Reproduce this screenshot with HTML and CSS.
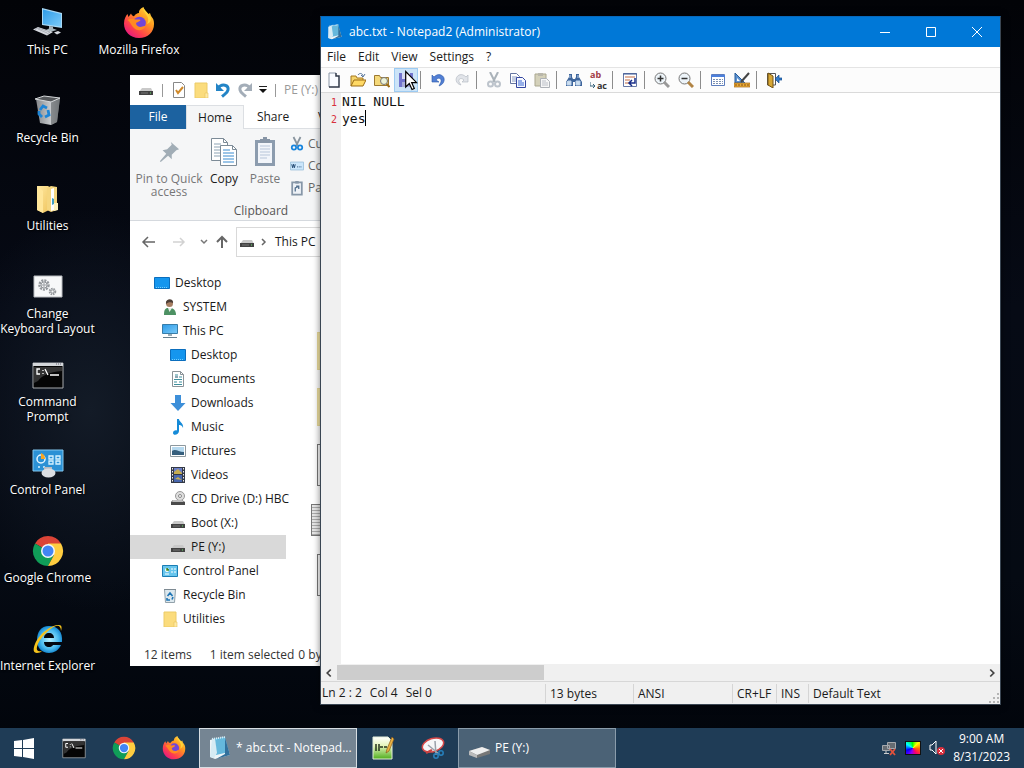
FILE: index.html
```
<!DOCTYPE html>
<html lang="en">
<head>
    <meta charset="UTF-8">
    <meta name="viewport" content="width=device-width, initial-scale=1.0">
    <title>Desktop</title>
    <link rel="stylesheet" href="styles.css">
</head>
<body>
    <!-- Shared icons -->
    <svg class="sprite" width="0" height="0" aria-hidden="true">
        <defs>
            <linearGradient id="gBlue" x1="0" y1="0" x2="1" y2="1"><stop offset="0" stop-color="#2d9be8"/><stop offset="1" stop-color="#7ccbf8"/></linearGradient>
            <linearGradient id="gFox" x1="1" y1="0" x2="0.2" y2="1"><stop offset="0" stop-color="#fff04a"/><stop offset="0.4" stop-color="#ff9a1f"/><stop offset="0.75" stop-color="#ff3f4d"/><stop offset="1" stop-color="#e31587"/></linearGradient>
            <linearGradient id="gBin" x1="0" y1="0" x2="1" y2="0"><stop offset="0" stop-color="#85888b"/><stop offset="0.6" stop-color="#c6c9cc"/><stop offset="1" stop-color="#76797c"/></linearGradient>
            <linearGradient id="gFold" x1="0" y1="0" x2="1" y2="1"><stop offset="0" stop-color="#ffe9a2"/><stop offset="1" stop-color="#efc35b"/></linearGradient>
            <radialGradient id="gIe"><stop offset="0" stop-color="#b9f1ff"/><stop offset="0.7" stop-color="#4bbcf0"/><stop offset="1" stop-color="#1a8bd2"/></radialGradient>
            <linearGradient id="gGreen" x1="0" y1="0" x2="0" y2="1"><stop offset="0" stop-color="#ffffff"/><stop offset="0.4" stop-color="#e4f5bb"/><stop offset="1" stop-color="#4fae1d"/></linearGradient>
        </defs>
        <symbol id="pc" viewBox="0 0 32 32">
            <path d="M10 1l20 5v15l-20-3z" fill="#a9d9f5"/>
            <path d="M11 2.500l18 4.500v12.500l-18-2.500z" fill="url(#gBlue)"/>
            <path d="M17 19l4 .6v2l4 1.500-7 2-4-2 3-1.500z" fill="#a8b6bd"/>
            <path d="M1 22.500l5-2.500 15 5-6 3.500z" fill="#d6d9df"/>
            <path d="M3 22.500l3-1.500 12 4-3 2M6 22l9 4" stroke="#9a9da8" stroke-width=".7" fill="none"/>
            <path d="M22 25.500l4-1.500 3 1.500-4 2z" fill="#d6d9df"/>
        </symbol>
        <symbol id="firefox" viewBox="0 0 32 32">
            <path d="M16 31C7 31 1 24.500 1 16.500 1 12 3 8.500 4.500 7l1 3L8 6.500c.5 1.500 1.500 2.500 3 2.800C12.500 7 14 6.300 16 6c-.3-2.500 1-4.500 4.500-6 .5 3 3 4.500 5 7l1.500-1c.5 2 1 3 2.500 5C31 13 31 15.500 31 17 31 25 25 31 16 31z" fill="url(#gFox)"/>
            <circle cx="16.500" cy="16" r="6.300" fill="#7246d8"/>
            <path d="M4.500 13c3-2 5-1.500 8-.5 2 .3 4-.5 5 .5-1 2-4 2-4.500 3.500.5 3 4 4 6.500 3 2-1 3.500-.5 2.500 1C19 24 14 24 11 21c-3-3-3-5-6.500-8z" fill="#ff8a22"/>
            <path d="M20.500 1c-.5 4 3.500 6 4.500 10 .5 2 0 4-1 6 3-1 4-3 4-6" fill="#ffdd3b" opacity=".8"/>
        </symbol>
        <symbol id="bin" viewBox="0 0 32 32">
            <path d="M4 4l24-1-3 24-6 3-11-2z" fill="url(#gBin)"/>
            <path d="M19 7l9-4-3 24-6 3z" fill="#6f7376" opacity=".7"/>
            <path d="M3 4l9-3 16 2-9 4z" fill="#55585b" stroke="#d5d8da"/>
            <g fill="none" stroke="#1e85d6" stroke-width="2.800"><path d="M8 15l3-4 4 2M16 15l1 5-4 2M10 22l-3-3 0-3"/></g>
        </symbol>
        <symbol id="folders" viewBox="0 0 32 32">
            <path d="M5 3h11l3 2v21l-8 4-6-3z" fill="url(#gFold)"/>
            <path d="M15 5l4-2 6 1v23l-6 2-4-2z" fill="#f5d67f"/>
            <path d="M19 6l3-1v22l-3 1z" fill="#fff"/>
            <path d="M20 15l2 1v5l-2 1z" fill="#3f9ec4"/>
            <path d="M8 5l3 3v22l-6-3V3z" fill="#ffe69a"/>
            <path d="M22 20h4v7l-4 1z" fill="#fff2bd"/>
        </symbol>
        <symbol id="gears" viewBox="0 0 32 32">
            <path d="M2 5h28v21H2z" fill="#f7f8f9" stroke="#b9bcc0"/>
            <g fill="none" stroke="#94989c"><circle cx="12" cy="14" r="4.500" stroke-width="2.500" stroke-dasharray="2 1"/><circle cx="12" cy="14" r="3"/><circle cx="12" cy="14" r="1.200"/><circle cx="20.500" cy="20.500" r="2.800" stroke-width="2" stroke-dasharray="1.500 .8"/><circle cx="20.500" cy="20.500" r="1.500"/></g>
        </symbol>
        <symbol id="cmd" viewBox="0 0 32 32">
            <path d="M1 4h30v25H1z" fill="#050505" stroke="#a8abae"/>
            <path d="M1 4h30v3H1z" fill="#d4d7da"/><path d="M24 5h6" stroke="#667" stroke-dasharray="1 1"/>
            <path d="M2 8h28v4C17 13 9 17 6 22l-4 2z" fill="#333"/>
            <path d="M8 10H5v5h3M11 11v1M11 14v1M13 10l3 6M18 16h9" stroke="#fff" stroke-width="1.300" fill="none"/>
        </symbol>
        <symbol id="cpanel" viewBox="0 0 32 32">
            <path d="M1 3h30v21H1z" fill="#2b91d5" stroke="#83c7ef"/>
            <circle cx="9" cy="12" r="4" fill="none" stroke="#e3f5ff" stroke-width="1.500"/><path d="M9 12V6a6 6 0 0 1 4 6z" fill="#f6a623"/>
            <path d="M17 9h4v3h-4zM24 9h4v3h-4zM17 14h4v3h-4zM24 14h4v3h-4zM6 20h2M11 20h2" fill="none" stroke="#d6f2ff" stroke-width="1.300"/>
            <path d="M12 20h8v6h-8z" fill="#b6bac0"/><ellipse cx="16.500" cy="26" rx="7" ry="4.500" fill="#dcdee2"/>
        </symbol>
        <symbol id="chrome" viewBox="0 0 32 32">
            <path d="M16 16L3 8.500a15 15 0 0 1 26 0z" fill="#db4437"/>
            <path d="M16 16L3 8.500A15 15 0 0 0 16 31l6-11z" fill="#109d58"/>
            <path d="M16 16V8.500h13A15 15 0 0 1 16 31l6-11z" fill="#ffcd40"/>
            <circle cx="16" cy="16" r="7" fill="#f4f7fb"/><circle cx="16" cy="16" r="5.500" fill="#4285f4"/>
        </symbol>
        <symbol id="ie" viewBox="0 0 32 32">
            <path d="M17 3C9 3 5 9 5 17s5 13 12 13c5 0 10-3 12-8h-8c-1 1.500-2 2-4 2-3 0-5-2-5-5h18C31 9 26 3 17 3zm-5 12c0-3 2-5 5-5s5 2 5 5z" fill="url(#gIe)" fill-rule="evenodd"/>
            <path d="M29 8c1-3 1-6-2-6C20 1 7 11 3 21c-2 5-2 9 2 9 2 0 4-1 5-2-3 1-6 0-5-4C7 15 18 5 24 3c3-1 5 1 5 5z" fill="#f5c31c"/>
        </symbol>
        <symbol id="drive" viewBox="0 0 16 16"><path d="M4 6h9l2 4H1z" fill="#c9c9c9"/><path d="M1 9h14v4H1z" fill="#424242"/><path d="M3 11h7" stroke="#777"/><path d="M12 11h1" stroke="#69e36d"/></symbol>
        <symbol id="cd" viewBox="0 0 16 16"><circle cx="10" cy="5" r="4.500" fill="#dedede" stroke="#999"/><circle cx="10" cy="5" r="1.500" fill="#fff" stroke="#888"/><path d="M3 9h9l3 2v3H1v-3z" fill="#4a4a4a"/><path d="M3 9h9l2 2H2z" fill="#bcbcbc"/></symbol>
        <symbol id="folder" viewBox="0 0 16 16"><path d="M2 1h12v15H2z" fill="#fbdc7d" stroke="#eccb68"/><path d="M12 11h3v5h-3z" fill="#ffeaa4" stroke="#e8c35c" stroke-width=".6"/></symbol>
        <symbol id="screen" viewBox="0 0 16 16"><path d="M.5 2.500h15v11H.5z" fill="#1596ee" stroke="#0b6ebd"/><path d="M2 12.500h12" stroke="#76d0ff" stroke-dasharray="1 1"/></symbol>
        <symbol id="monitor" viewBox="0 0 16 16"><path d="M.5 1.500h15v9H.5z" fill="url(#gBlue)" stroke="#377da9"/><path d="M6 11h4v2H6z" fill="#9aabb3"/><path d="M1 14.500h14" stroke="#667f8d"/></symbol>
        <symbol id="user" viewBox="0 0 16 16"><circle cx="7.500" cy="4.500" r="3.500" fill="#a67e62"/><path d="M4 5c-1-6 8-6 7-1C9 3 6 3 4 5z" fill="#4b3d35"/><path d="M2 16c0-5 1-7 4-7h2c4 0 6 3 6 7z" fill="#4d9163"/><path d="M6 9l1.500 4L10 9z" fill="#e9efe9"/></symbol>
        <symbol id="doc" viewBox="0 0 16 16"><path d="M2.500.5h8l3 3v12h-11z" fill="#fff" stroke="#8b9398"/><path d="M10.500.5v3h3" fill="none" stroke="#8b9398"/><path d="M5 4h3M9 6h3M4 8.500h8M4 11h3M9 11h3M4 13.500h8" stroke="#3f8f9d"/><path d="M5 6h3" stroke="#25516a"/></symbol>
        <symbol id="down" viewBox="0 0 16 16"><path d="M5 0h6v8h4.500L8 16 .5 8H5z" fill="#3d8fd9"/></symbol>
        <symbol id="music" viewBox="0 0 16 16"><path d="M7 0h2c0 3 5 4 4 9-1-3-3-3-4-3v6c0 4-6 5-6 2 0-2 2-3 4-2.500z" fill="#168bd8"/></symbol>
        <symbol id="picture" viewBox="0 0 16 16"><path d="M.5 2.500h15v11H.5z" fill="#fff" stroke="#8d989e"/><path d="M2 4h12v8H2z" fill="#b6d9ef"/><path d="M2 8c4-3 6 1 12 1v3H2z" fill="#365f7d"/></symbol>
        <symbol id="video" viewBox="0 0 16 16"><path d="M1 0h14v16H1z" fill="#333947"/><path d="M4 1h8v6H4z" fill="#6d80c8"/><path d="M4 8h8v7H4z" fill="#4867ae"/><path d="M4 5l4-3 4 4v1H4zM5 12l3-2 4 3z" fill="#c5ac50"/><path d="M2.500 1v14M13.500 1v14" stroke="#eee" stroke-dasharray="1.500 1.500"/></symbol>
        <symbol id="smallbin" viewBox="0 0 16 16"><path d="M2.500 2.500h11l-1 13h-9z" fill="#dce8ee" stroke="#92a1aa"/><path d="M2 2.500h12" stroke="#7d8a92"/><path d="M5.500 9L8 6l2.500 3M11 10l-1 2.500M8 13H5l0-2" stroke="#1f75b5" stroke-width="1.600" fill="none"/></symbol>
        <symbol id="panel" viewBox="0 0 16 16"><path d="M.5 2.500h15v11H.5z" fill="#67c5ed" stroke="#1a7db4"/><circle cx="5" cy="7" r="2" fill="#fff"/><path d="M5 5v2h2" stroke="#3f8a23" stroke-width="1.500"/><path d="M9 6h2M12 6h2M9 9h2M12 9h2M3 11h4" stroke="#fff"/></symbol>
        <symbol id="undo" viewBox="0 0 16 16"><path d="M3 6c4-5 11-3 10 2-.5 3-3 4-6 6.500" fill="none" stroke="currentColor" stroke-width="3"/><path d="M1 1v8h8z" fill="currentColor"/></symbol>
        <symbol id="redo" viewBox="0 0 16 16"><path d="M13 6C9 1 2 3 3 8c.5 3 3 4 6 6.500" fill="none" stroke="currentColor" stroke-width="3"/><path d="M15 1v8H7z" fill="currentColor"/></symbol>
        <symbol id="scissors" viewBox="0 0 16 16"><path d="M4 0l5 10M12 0L7 10" stroke="#88949e" stroke-width="2"/><g fill="none" stroke="currentColor" stroke-width="2"><circle cx="4.500" cy="12" r="2.500"/><circle cx="11.500" cy="12" r="2.500"/></g></symbol>
        <symbol id="pages" viewBox="0 0 26 30"><g fill="#fff" stroke="#7c8b97"><path d="M.5 1.500h12l4 4v18H.5z"/><path d="M9.500 8.500h12l4 4v16h-16z"/></g><path d="M12.500 1.500v4h4M21.500 8.500v4h4" fill="none" stroke="#7c8b97"/><path d="M3 7h7M3 10h6M3 13h6M3 16h6M3 19h6" stroke="#8da3b4"/><path d="M12 13h7M12 16h11M12 19h11M12 22h11M12 25h11" stroke="#398bd0"/></symbol>
        <symbol id="clipboard" viewBox="0 0 22 30"><path d="M1 3h20v26H1z" fill="#8c9cae"/><path d="M4 6h14v20H4z" fill="#f2f5fa"/><path d="M6 9h10M6 12h10M6 15h10M6 18h10M6 21h7" stroke="#b7c5d9"/><path d="M6 2h3V0h4v2h3v4H6z" fill="#8795a6"/></symbol>
        <symbol id="notepad" viewBox="0 0 24 24"><path d="M2 4l14-3 6 18-15 4-5-2z" fill="#eef4f7"/><path d="M4 3l13-2 4 15-13 3z" fill="#65b8dc"/><path d="M4 3l3-.5L9 17l-3 5-4-1z" fill="#d5ebf4"/><path d="M17 2l5 17-14 4 9-5z" fill="#326f9b"/><path d="M4 3l13-2" stroke="#d8edf6" stroke-width="2" stroke-dasharray="1 1"/></symbol>
        <symbol id="npp" viewBox="0 0 24 24"><path d="M2 1h15l4 4v18H2z" fill="url(#gGreen)" stroke="#e4eeda"/><path d="M5 8v7M8 8v7M9 11h3M13 11h3" stroke="#26351e" stroke-width="1.500"/><path d="M21 1l2 2-5 12-3 2 1-4z" fill="#eab344" stroke="#8b5a1a" stroke-width=".7"/></symbol>
        <symbol id="snip" viewBox="0 0 24 24"><ellipse cx="12" cy="9" rx="11" ry="6.500" fill="#f6f6f8" stroke="#d64848" stroke-width="1.500" transform="rotate(-18 12 9)"/><path d="M7 9l11 9M14 5l1 14" stroke="#9aa0aa" stroke-width="1.500"/><circle cx="15" cy="20" r="2.200" fill="none" stroke="#2781bd" stroke-width="1.500"/><circle cx="20" cy="17" r="2.200" fill="none" stroke="#2781bd" stroke-width="1.500"/><path d="M5 17l6-3" stroke="#c64242" stroke-width="2.500"/></symbol>
    </svg>

    <div class="desktop">
        <main class="shortcuts">
            <a class="shortcut" href="#"><svg><use href="#pc"/></svg><span>This PC</span></a>
            <a class="shortcut" href="#"><svg><use href="#bin"/></svg><span>Recycle Bin</span></a>
            <a class="shortcut" href="#"><svg><use href="#folders"/></svg><span>Utilities</span></a>
            <a class="shortcut" href="#"><svg><use href="#gears"/></svg><span>Change<br>Keyboard Layout</span></a>
            <a class="shortcut" href="#"><svg><use href="#cmd"/></svg><span>Command<br>Prompt</span></a>
            <a class="shortcut" href="#"><svg><use href="#cpanel"/></svg><span>Control Panel</span></a>
            <a class="shortcut" href="#"><svg><use href="#chrome"/></svg><span>Google Chrome</span></a>
            <a class="shortcut" href="#"><svg><use href="#ie"/></svg><span>Internet Explorer</span></a>
            <a class="shortcut" href="#"><svg><use href="#firefox"/></svg><span>Mozilla Firefox</span></a>
        </main>

        <!-- File Explorer -->
        <section class="window explorer">
            <header class="explorer-title">
                <svg class="icon"><use href="#drive"/></svg>
                <i class="bar"></i>
                <button aria-label="Properties"><svg class="icon" viewBox="0 0 16 16"><path d="M2.500.5h8l3 3v12h-11z" fill="#fff" stroke="#888"/><path d="M5 8l2 3 5-6" fill="none" stroke="#d08a2b" stroke-width="2"/></svg></button>
                <button aria-label="New folder"><svg class="icon"><use href="#folder"/></svg></button>
                <button class="blue" aria-label="Undo"><svg class="icon"><use href="#undo"/></svg></button>
                <button class="grey" aria-label="Redo"><svg class="icon"><use href="#redo"/></svg></button>
                <button class="more" aria-label="Customize"><svg viewBox="0 0 8 8"><path d="M0 .5h8" stroke="#222"/><path d="M0 3h8L4 7z" fill="#111"/></svg></button>
                <i class="bar"></i>
                <span class="caption">PE (Y:)</span>
            </header>
            <nav class="tabs">
                <button class="tab file">File</button>
                <button class="tab active">Home</button>
                <button class="tab">Share</button>
                <button class="tab">View</button>
            </nav>
            <div class="ribbon">
                <div class="ribbon-group">
                    <div class="ribbon-tools">
                        <button class="big pin"><svg viewBox="0 0 24 24"><path d="M14 1l9 8-3 1-5 5v5l-4-4-8 7-1-1 7-8-4-4 5-1 5-5z" fill="#a1adb6"/></svg>Pin to Quick access</button>
                        <button class="big copy"><svg viewBox="0 0 26 30"><use href="#pages"/></svg>Copy</button>
                        <button class="big paste"><svg viewBox="0 0 22 30"><use href="#clipboard"/></svg>Paste</button>
                        <div class="small-tools">
                            <button class="blue"><svg class="icon"><use href="#scissors"/></svg>Cut</button>
                            <button><svg class="icon" viewBox="0 0 16 16"><path d="M.5 3.500h15v9H.5z" fill="#cbe6fb" stroke="#9dc1dc"/><path d="M2 6l1 4 1-4 1 4 1-4M8 9h1M10 9h1M12 9h1" fill="none" stroke="#173e68"/></svg>Copy path</button>
                            <button class="grey"><svg class="icon" viewBox="0 0 16 16"><path d="M2.500 1.500h11v14h-11z" fill="#eef2f7" stroke="#8797a8" stroke-width="2"/><path d="M6 0h4v3H6z" fill="#8797a8"/><path d="M6 12V8l4-2M7 6h3v3" stroke="#53718f" stroke-width="1.500" fill="none"/></svg>Paste shortcut</button>
                        </div>
                    </div>
                    <div class="group-name">Clipboard</div>
                </div>
            </div>
            <div class="address">
                <button aria-label="Back"><svg viewBox="0 0 16 16"><path d="M14 8H2M7 3L2 8l5 5" stroke="#666" stroke-width="1.500" fill="none"/></svg></button>
                <button aria-label="Forward"><svg viewBox="0 0 16 16"><path d="M2 8h11M9 4l4 4-4 4" stroke="#d2d2d2" stroke-width="1.500" fill="none"/></svg></button>
                <button class="recent" aria-label="Recent"><svg viewBox="0 0 16 16"><path d="M5 6l3 3 3-3" stroke="#777" stroke-width="1.500" fill="none"/></svg></button>
                <button aria-label="Up"><svg viewBox="0 0 16 16"><path d="M8 14V3M3 8l5-5 5 5" stroke="#666" stroke-width="2" fill="none"/></svg></button>
                <div class="path"><svg class="icon"><use href="#drive"/></svg><svg class="icon" viewBox="0 0 16 16"><path d="M7 5l3 3-3 3" stroke="#666" stroke-width="1.500" fill="none"/></svg><span>This PC</span></div>
            </div>
            <div class="explorer-body">
                <nav class="tree">
                    <a href="#"><svg class="icon"><use href="#screen"/></svg>Desktop</a>
                    <a class="level1" href="#"><svg class="icon"><use href="#user"/></svg>SYSTEM</a>
                    <a class="level1" href="#"><svg class="icon"><use href="#monitor"/></svg>This PC</a>
                    <a class="level2" href="#"><svg class="icon"><use href="#screen"/></svg>Desktop</a>
                    <a class="level2" href="#"><svg class="icon"><use href="#doc"/></svg>Documents</a>
                    <a class="level2" href="#"><svg class="icon"><use href="#down"/></svg>Downloads</a>
                    <a class="level2" href="#"><svg class="icon"><use href="#music"/></svg>Music</a>
                    <a class="level2" href="#"><svg class="icon"><use href="#picture"/></svg>Pictures</a>
                    <a class="level2" href="#"><svg class="icon"><use href="#video"/></svg>Videos</a>
                    <a class="level2" href="#"><svg class="icon"><use href="#cd"/></svg>CD Drive (D:) HBC</a>
                    <a class="level2" href="#"><svg class="icon"><use href="#drive"/></svg>Boot (X:)</a>
                    <a class="level2 selected" href="#"><svg class="icon"><use href="#drive"/></svg>PE (Y:)</a>
                    <a class="level1" href="#"><svg class="icon"><use href="#panel"/></svg>Control Panel</a>
                    <a class="level1" href="#"><svg class="icon"><use href="#smallbin"/></svg>Recycle Bin</a>
                    <a class="level1" href="#"><svg class="icon"><use href="#folder"/></svg>Utilities</a>
                </nav>
                <div class="files">
                    <i class="thumb yellow"></i><i class="thumb yellow"></i><i class="thumb"></i><i class="thumb wide"></i><i class="thumb"></i>
                </div>
            </div>
            <footer class="explorer-status"><span>12 items</span><span>1 item selected</span><span>0 bytes</span></footer>
        </section>

        <!-- Notepad2 -->
        <section class="window notepad">
            <header class="titlebar">
                <svg class="icon"><use href="#notepad"/></svg>
                <span class="caption">abc.txt - Notepad2 (Administrator)</span>
                <button aria-label="Minimize"><svg viewBox="0 0 10 10"><path d="M0 5.500h10" stroke="#fff"/></svg></button>
                <button aria-label="Maximize"><svg viewBox="0 0 10 10"><path d="M.5.5h9v9h-9z" stroke="#fff" fill="none"/></svg></button>
                <button aria-label="Close"><svg viewBox="0 0 10 10"><path d="M0 0l10 10M10 0L0 10" stroke="#fff"/></svg></button>
            </header>
            <nav class="menubar">
                <button>File</button><button>Edit</button><button>View</button><button>Settings</button><button>?</button>
            </nav>
            <div class="toolbar">
                <button aria-label="New"><svg class="icon" viewBox="0 0 16 16"><path d="M3 1h7l3 3v11H3z" fill="#fafcff"/><path d="M3 15V1h7" fill="none" stroke="#8c98a8"/><path d="M10 1v3h3v11H3" fill="none" stroke="#303848" stroke-width="1.500"/></svg></button>
                <button aria-label="Open"><svg class="icon" viewBox="0 0 16 16"><path d="M1 14V4h5l1 2h6v3" fill="#f5d46b" stroke="#a6781f"/><path d="M1 14l3-6h12l-3 6z" fill="#ffd965" stroke="#9a6b15"/><path d="M8 3c2-3 5-1 5 1M11 3l2 2 2-3" fill="none" stroke="#54739a"/></svg></button>
                <button aria-label="Browse"><svg class="icon" viewBox="0 0 16 16"><path d="M.5 13.500v-10h5l1 2h8v8z" fill="#f4d879" stroke="#9c7830"/><circle cx="10" cy="9" r="3.500" fill="#ecf2d7" stroke="#777"/><path d="M12.500 12l3 3" stroke="#9d6d17" stroke-width="2"/></svg></button>
                <button class="hot" aria-label="Save"><svg class="icon" viewBox="0 0 16 16"><path d="M1 1h14v14H1z" fill="#7275cd"/><path d="M4 1h8v6H4z" fill="#d6dcf3"/><path d="M4 10h8v5H4z" fill="#a7addb"/></svg></button>
                <i class="sep"></i>
                <button aria-label="Undo"><svg class="icon" viewBox="0 0 16 16"><path d="M2 3v7h7L6 8c2-3 6-2 5 2l-2 4c6-2 7-9 2-11-3-1-5 0-7 2z" fill="#527fd4" stroke="#2957a8" stroke-width=".6"/></svg></button>
                <button aria-label="Redo"><svg class="icon" viewBox="0 0 16 16"><path d="M14 3v7H8l2-2C7 5 4 7 5 10l2 3c-5-1-7-7-2-10 3-1 5 0 7 2z" fill="#e1e4e9" stroke="#b6bbc4" stroke-width=".7"/></svg></button>
                <i class="sep"></i>
                <button class="grey faded" aria-label="Cut"><svg class="icon"><use href="#scissors"/></svg></button>
                <button aria-label="Copy"><svg class="icon" viewBox="0 0 16 16"><path d="M.5 1.500h6l3 3v7h-9z" fill="#fff" stroke="#6575a0"/><path d="M2 5h5M2 7h5M2 9h5" stroke="#889ac2"/><path d="M6.500 5.500h6l3 3v7h-9z" fill="#f5f8ff" stroke="#3547a0"/><path d="M8 9h4M8 11h6M8 13h6" stroke="#3966d2"/></svg></button>
                <button aria-label="Paste"><svg class="icon" viewBox="0 0 16 16"><path d="M1 2h11v12H1z" fill="#d4d1ba" stroke="#aaa78f"/><path d="M4 1h5v3H4z" fill="#b9b7ab"/><path d="M6.500 6.500h6l3 3v6h-9z" fill="#f6f6f6" stroke="#aeb2b8"/><path d="M8 9h4M8 11h6M8 13h6" stroke="#bcc0c8"/></svg></button>
                <i class="sep"></i>
                <button aria-label="Find"><svg class="icon" viewBox="0 0 16 16"><path d="M3 2h3v3l1 2h2l1-2V2h3v3l3 5v4H9v-4H7v4H0v-4l3-5z" fill="#3e659b"/><path d="M2 9h3v4H1v-3zM11 9h3v4h-4V9zM4 3v3M12 3v3" fill="#cddff0" stroke="#bed4ec"/></svg></button>
                <button class="replace" aria-label="Replace"><b>ab</b><b>ac</b><svg viewBox="0 0 6 6"><path d="M0 0v4h5M3 2l2 2-2 2" fill="none" stroke="#356078"/></svg></button>
                <i class="sep"></i>
                <button aria-label="Word wrap"><svg class="icon" viewBox="0 0 16 16"><path d="M1.500 1.500h13v13h-13z" fill="#fff" stroke="#6678a6"/><path d="M1 2h14" stroke="#3b5692"/><path d="M3 5h10M3 8h5M3 11h4" stroke="#c36a42"/><path d="M13 6v5H8M10 8l-3 3 3 3" fill="none" stroke="#172d89" stroke-width="1.500"/></svg></button>
                <i class="sep"></i>
                <button aria-label="Zoom in"><svg class="icon" viewBox="0 0 16 16"><circle cx="6.500" cy="6.500" r="5.500" fill="#edf4f9" stroke="#777"/><path d="M3.500 6.500h6M6.500 3.500v6" stroke="#333" stroke-width="1.500"/><path d="M10 10l5 5" stroke="#999" stroke-width="3"/></svg></button>
                <button aria-label="Zoom out"><svg class="icon" viewBox="0 0 16 16"><circle cx="6.500" cy="6.500" r="5.500" fill="#edf4f9" stroke="#777"/><path d="M3.500 6.500h6" stroke="#333" stroke-width="1.500"/><path d="M10 10l5 5" stroke="#b18445" stroke-width="3"/></svg></button>
                <i class="sep"></i>
                <button aria-label="Scheme"><svg class="icon" viewBox="0 0 16 16"><path d="M1.500 2.500h13v11h-13z" fill="#fff" stroke="#5d7dbd"/><path d="M1 3h14v2H1z" fill="#4d80db"/><path d="M3 7.500h10M3 9.500h10M3 11.500h10" stroke="#7b90b2" stroke-dasharray="2 1"/></svg></button>
                <button aria-label="Customize schemes"><svg class="icon" viewBox="0 0 16 16"><path d="M1 1v10h10z" fill="#5c91cf" stroke="#265c9c"/><path d="M3 6v3h3z" fill="#fff"/><path d="M0 11h16v4H0z" fill="#e9ae37" stroke="#a86418" stroke-width=".7"/><path d="M15 1L7 10" stroke="#444" stroke-width="2"/><path d="M2 12v2M5 12v2M8 12v2M11 12v2M14 12v2" stroke="#8b4d16"/></svg></button>
                <i class="sep"></i>
                <button aria-label="Exit"><svg class="icon" viewBox="0 0 16 16"><path d="M1.500 13V1.500h8V13z" fill="#fff" stroke="#555"/><path d="M2 1l5 3v12l-5-3z" fill="#d7a735" stroke="#735314"/><path d="M16 6h-3V3L9 7l4 4V8h3z" fill="#357bc8" stroke="#164e91" stroke-width=".7"/></svg></button>
            </div>
            <div class="editor">
                <div class="gutter"><span>1</span><span>2</span></div>
                <div class="page">
                    <textarea class="text" aria-label="Document text" spellcheck="false">NIL NULL
yes</textarea>
                    <i class="caret"></i>
                </div>
            </div>
            <div class="scrollbar">
                <button aria-label="Scroll left"><svg viewBox="0 0 16 16"><path d="M10 4L6 8l4 4" stroke="#444" stroke-width="2" fill="none"/></svg></button>
                <div class="track"><i class="grip"></i></div>
                <button aria-label="Scroll right"><svg viewBox="0 0 16 16"><path d="M6 4l4 4-4 4" stroke="#444" stroke-width="2" fill="none"/></svg></button>
            </div>
            <footer class="statusbar">
                <div class="position"><span>Ln 2 : 2</span><span>Col 4</span><span>Sel 0</span></div>
                <span class="bytes">13 bytes</span><span class="encoding">ANSI</span><span class="eol">CR+LF</span><span class="mode">INS</span><span class="scheme">Default Text</span>
                <svg class="resize" viewBox="0 0 10 10"><path d="M8 0h2v2H8zM4 4h2v2H4zM8 4h2v2H8zM0 8h2v2H0zM4 8h2v2H4zM8 8h2v2H8z" fill="#b5b5b5"/></svg>
            </footer>
            <svg class="pointer" viewBox="0 0 13 21"><path d="M.7 1.500v15.500l3.600-3.500 2.700 6 2.300-1-2.600-5.800h5z" fill="#fff" stroke="#000" stroke-width="1.200"/></svg>
        </section>
    </div>

    <footer class="taskbar">
        <button class="task" aria-label="Start"><svg viewBox="0 0 24 24"><path d="M2 5l8-1v8H2zM11 4l11-2v10H11zM2 13h8v8l-8-1zM11 13h11v10l-11-2z" fill="#fff"/></svg></button>
        <button class="task" aria-label="Command Prompt"><svg><use href="#cmd"/></svg></button>
        <button class="task" aria-label="Google Chrome"><svg><use href="#chrome"/></svg></button>
        <button class="task" aria-label="Mozilla Firefox"><svg><use href="#firefox"/></svg></button>
        <button class="task open focused"><svg><use href="#notepad"/></svg><span>* abc.txt - Notepad...</span></button>
        <button class="task" aria-label="Notepad++"><svg><use href="#npp"/></svg></button>
        <button class="task" aria-label="Snipping Tool"><svg><use href="#snip"/></svg></button>
        <button class="task open"><svg viewBox="0 0 24 24"><path d="M2 15l13-4 8 3v4L10 22l-8-3z" fill="#777"/><path d="M2 15l13-4 8 3-13 5z" fill="#eee"/><path d="M2 15l8 4v3l-8-3z" fill="#bbb"/></svg><span>PE (Y:)</span></button>
        <div class="tray">
            <svg viewBox="0 0 16 16"><path d="M6.500 2.500h8v6h-8zM1.500 5.500h7v5h-7z" fill="#666c72" stroke="#a5a9ad"/><path d="M3 13.500h5M5 11v2" stroke="#ccc"/><path d="M9 9l5 6M14 9l-5 6" stroke="#e4513b" stroke-width="1.800"/></svg>
            <div class="colors"></div>
            <svg viewBox="0 0 16 16"><path d="M1 5h2l4-4v13l-4-4H1z" fill="none" stroke="#fff"/><circle cx="12" cy="11" r="4" fill="#d92f3d"/><path d="M10 9l4 4M14 9l-4 4" stroke="#fff"/></svg>
            <time>9:00 AM<br>8/31/2023</time>
        </div>
    </footer>
</body>
</html>
```

FILE: styles.css
```
* {
    box-sizing: border-box;
}
body {
    margin: 0;
    height: 100vh;
    overflow: hidden;
    display: flex;
    flex-direction: column;
    font: 12px/16px "Open Sans", "Noto Sans", sans-serif;
    color: #1a1a1a;
    background:
        radial-gradient(ellipse 140px 200px at 90px 410px, #131b27, transparent),
        linear-gradient(#020307, #060a15 40%, #050a13 75%, #01040a);
}
button {
    font: inherit;
    color: inherit;
    background: none;
    border: 0;
    padding: 0;
    display: flex;
    align-items: center;
    justify-content: center;
    white-space: nowrap;
}
a {
    color: inherit;
    text-decoration: none;
}
svg {
    flex: none;
}
.sprite {
    position: absolute;
}
.icon {
    width: 16px;
    height: 16px;
}
.blue {
    color: #2384c6;
}
.grey {
    color: #a3adb8;
}
.faded {
    opacity: 0.7;
}

/* Desktop */
.desktop {
    flex: 1;
    min-height: 0;
    position: relative;
}
.shortcuts {
    display: grid;
    grid-template-rows: repeat(8, 88px);
    grid-template-columns: 95px 88px;
    grid-auto-flow: column;
}
.shortcut {
    display: flex;
    flex-direction: column;
    align-items: center;
    padding-top: 7px;
    gap: 3px;
    color: #fff;
    text-align: center;
    line-height: 15px;
    white-space: nowrap;
    text-shadow: 1px 1px 2px #000;
}
.shortcut svg {
    width: 32px;
    height: 32px;
}
.window {
    position: absolute;
    display: flex;
    flex-direction: column;
    overflow: hidden;
    background: #fff;
}

/* Explorer */
.explorer {
    left: 130px;
    top: 75px;
    bottom: 62px;
    width: 50%;
}
.explorer-title {
    display: flex;
    align-items: center;
    height: 30px;
    padding-left: 8px;
    gap: 6px;
}
.bar {
    width: 1px;
    height: 13px;
    margin: 0 2px;
    background: #999;
}
.more svg {
    width: 8px;
    height: 8px;
}
.explorer-title .caption {
    color: #999;
}
.tabs {
    display: flex;
    height: 24px;
    border-bottom: 1px solid #dcdfe3;
}
.tab {
    width: 58px;
    height: 24px;
}
.tab.file {
    width: 56px;
    background: #1c62a0;
    color: #fff;
}
.tab.active {
    background: #f5f6f7;
    border: 1px solid #dcdfe3;
    border-bottom: 0;
}
.ribbon {
    background: #f5f6f7;
    border-bottom: 1px solid #d5d9de;
    height: 92px;
}
.ribbon-group {
    width: 262px;
}
.ribbon-tools {
    display: flex;
    height: 74px;
    padding-top: 4px;
}
.big {
    flex-direction: column;
    justify-content: flex-start;
    gap: 5px;
    line-height: 13px;
    padding-top: 4px;
}
.big svg {
    width: 26px;
    height: 30px;
}
.big.pin {
    width: 78px;
    white-space: normal;
    color: #777;
}
.pin svg {
    width: 22px;
}
.big.copy {
    width: 32px;
}
.big.paste {
    width: 50px;
    color: #777;
}
.small-tools {
    display: flex;
    flex-direction: column;
    gap: 6px;
    padding-top: 3px;
}
.small-tools button {
    justify-content: flex-start;
    gap: 4px;
    color: #666;
}
.small-tools svg {
    width: 14px;
}
.small-tools .blue svg {
    color: #1684dd;
}
.group-name {
    text-align: center;
    color: #555;
}
.address {
    display: flex;
    align-items: center;
    height: 41px;
    padding-left: 11px;
    gap: 14px;
}
.address svg {
    width: 16px;
    height: 16px;
}
.address .recent {
    width: 5px;
}
.address .recent + button {
    margin-left: -6px;
}
.path {
    flex: 1;
    height: 30px;
    display: flex;
    align-items: center;
    padding-left: 2px;
    margin-left: -8px;
    border: 1px solid #d9d9d9;
}
.path span {
    margin-left: 4px;
}
.explorer-body {
    flex: 1;
    display: flex;
    padding-top: 9px;
}
.tree {
    width: 156px;
}
.tree a {
    display: flex;
    align-items: center;
    gap: 5px;
    height: 24px;
    padding-left: 24px;
    white-space: nowrap;
}
.tree .level1 {
    padding-left: 32px;
}
.tree .level2 {
    padding-left: 40px;
}
.tree .selected {
    background: #d9d9d9;
}
.files {
    display: flex;
    flex-direction: column;
    gap: 18px;
    padding: 61px 0 0 31px;
}
.thumb {
    width: 30px;
    height: 42px;
    border: 1px solid #777;
    background: #fafafa;
}
.thumb.yellow {
    height: 38px;
    background: #f5e6a5;
    border-color: #eadb9c;
}
.thumb.wide {
    width: 36px;
    height: 32px;
    margin-left: -6px;
    background: repeating-linear-gradient(#e6e6e6 0 2px, #aaa 2px 3px);
}
.explorer-status {
    display: flex;
    align-items: center;
    height: 22px;
    padding-left: 14px;
    color: #333;
}
.explorer-status span {
    margin-right: 4px;
}
.explorer-status span:first-child {
    margin-right: 18px;
}

/* Notepad2 */
.notepad {
    left: 320px;
    right: 23px;
    top: 16px;
    bottom: 23px;
    border: 1px solid #3a4653;
    border-top-color: #0868bb;
    box-shadow: 0 0 7px rgba(0, 0, 0, 0.5);
}
.titlebar {
    display: flex;
    align-items: center;
    height: 30px;
    padding-left: 6px;
    background: #0078d7;
    color: #fff;
}
.titlebar .caption {
    flex: 1;
    padding-left: 6px;
}
.titlebar button {
    width: 46px;
    height: 30px;
}
.titlebar button svg {
    width: 10px;
    height: 10px;
}
.menubar {
    display: flex;
    height: 20px;
    padding-left: 6px;
    gap: 12px;
}
.toolbar {
    display: flex;
    align-items: center;
    height: 26px;
    padding-left: 1px;
    border-top: 1px solid #e4e4e4;
    border-bottom: 1px solid #dadada;
    background: #fcfcfc;
}
.toolbar button {
    width: 24px;
    height: 24px;
}
.toolbar .hot {
    background: #cce4f8;
    border: 1px solid #9dcbf2;
}
.sep {
    width: 1px;
    height: 18px;
    margin: 0 5px 0 2px;
    background: #8c8c8c;
}
.toolbar .replace {
    position: relative;
    flex-direction: column;
    font: 9px/11px "Open Sans", sans-serif;
    color: #333;
}
.replace b:first-child {
    align-self: flex-start;
    padding-left: 4px;
    color: #a23b45;
}
.replace b + b {
    align-self: flex-end;
    padding-right: 3px;
}
.replace svg {
    position: absolute;
    left: 4px;
    bottom: 4px;
    width: 6px;
    height: 6px;
}
.editor {
    flex: 1;
    display: flex;
    min-height: 0;
    font: 13px/17px "DejaVu Sans Mono", monospace;
}
.gutter {
    display: flex;
    flex-direction: column;
    width: 20px;
    padding: 1px 4px 0 0;
    background: #f0f0f0;
    color: #d8303c;
    font-size: 10px;
    text-align: right;
}
.page {
    flex: 1;
    position: relative;
}
.text {
    display: block;
    width: 100%;
    height: 100%;
    padding: 0 1px;
    border: 0;
    outline: 0;
    resize: none;
    font: inherit;
    color: #111;
}
.caret {
    position: absolute;
    left: 24px;
    top: 17px;
    width: 1px;
    height: 16px;
    background: #000;
}
.scrollbar {
    display: flex;
    height: 17px;
    background: #f0f0f0;
}
.scrollbar button {
    width: 16px;
}
.scrollbar svg {
    width: 14px;
    height: 14px;
}
.track {
    flex: 1;
}
.grip {
    display: block;
    width: 32%;
    height: 15px;
    margin-top: 1px;
    background: #cdcdcd;
}
.statusbar {
    display: flex;
    align-items: center;
    height: 23px;
    border-top: 1px solid #d7d7d7;
    background: #f0f0f0;
}
.statusbar > span {
    height: 19px;
    padding-left: 4px;
    border-left: 1px solid #d5d5d5;
    line-height: 19px;
}
.position {
    display: flex;
    flex: 1;
    gap: 8px;
    padding-left: 1px;
}
.bytes {
    width: 88px;
}
.encoding {
    width: 99px;
}
.eol {
    width: 44px;
}
.mode {
    width: 32px;
}
.scheme {
    width: 181px;
}
.resize {
    align-self: flex-end;
    width: 10px;
    height: 10px;
    margin: 0 1px 1px 0;
}
.pointer {
    position: absolute;
    left: 84px;
    top: 53px;
    width: 13px;
    height: 21px;
}

/* Taskbar */
.taskbar {
    display: flex;
    height: 40px;
    gap: 1px;
    background: #1f3c56;
    color: #fff;
}
.task {
    width: 49px;
}
.task:first-child {
    width: 48px;
}
.task svg {
    width: 24px;
    height: 24px;
}
.task.open {
    width: 158px;
    justify-content: flex-start;
    gap: 4px;
    padding-left: 8px;
    background: #4b6276;
    border: 1px solid #8a9cab;
}
.task.focused {
    background: #758593;
    border-color: #d6dde2;
}
.tray {
    display: flex;
    align-items: center;
    gap: 8px;
    margin-left: auto;
    padding-right: 14px;
}
.tray svg {
    width: 16px;
    height: 16px;
}
.colors {
    width: 16px;
    height: 14px;
    border: 1px solid #111;
    background: conic-gradient(from 45deg, #ff0, #f60, #f06, #80f, #00f, #0ff, #0f0, #ff0);
}
.tray time {
    line-height: 18px;
    text-align: center;
}
```
